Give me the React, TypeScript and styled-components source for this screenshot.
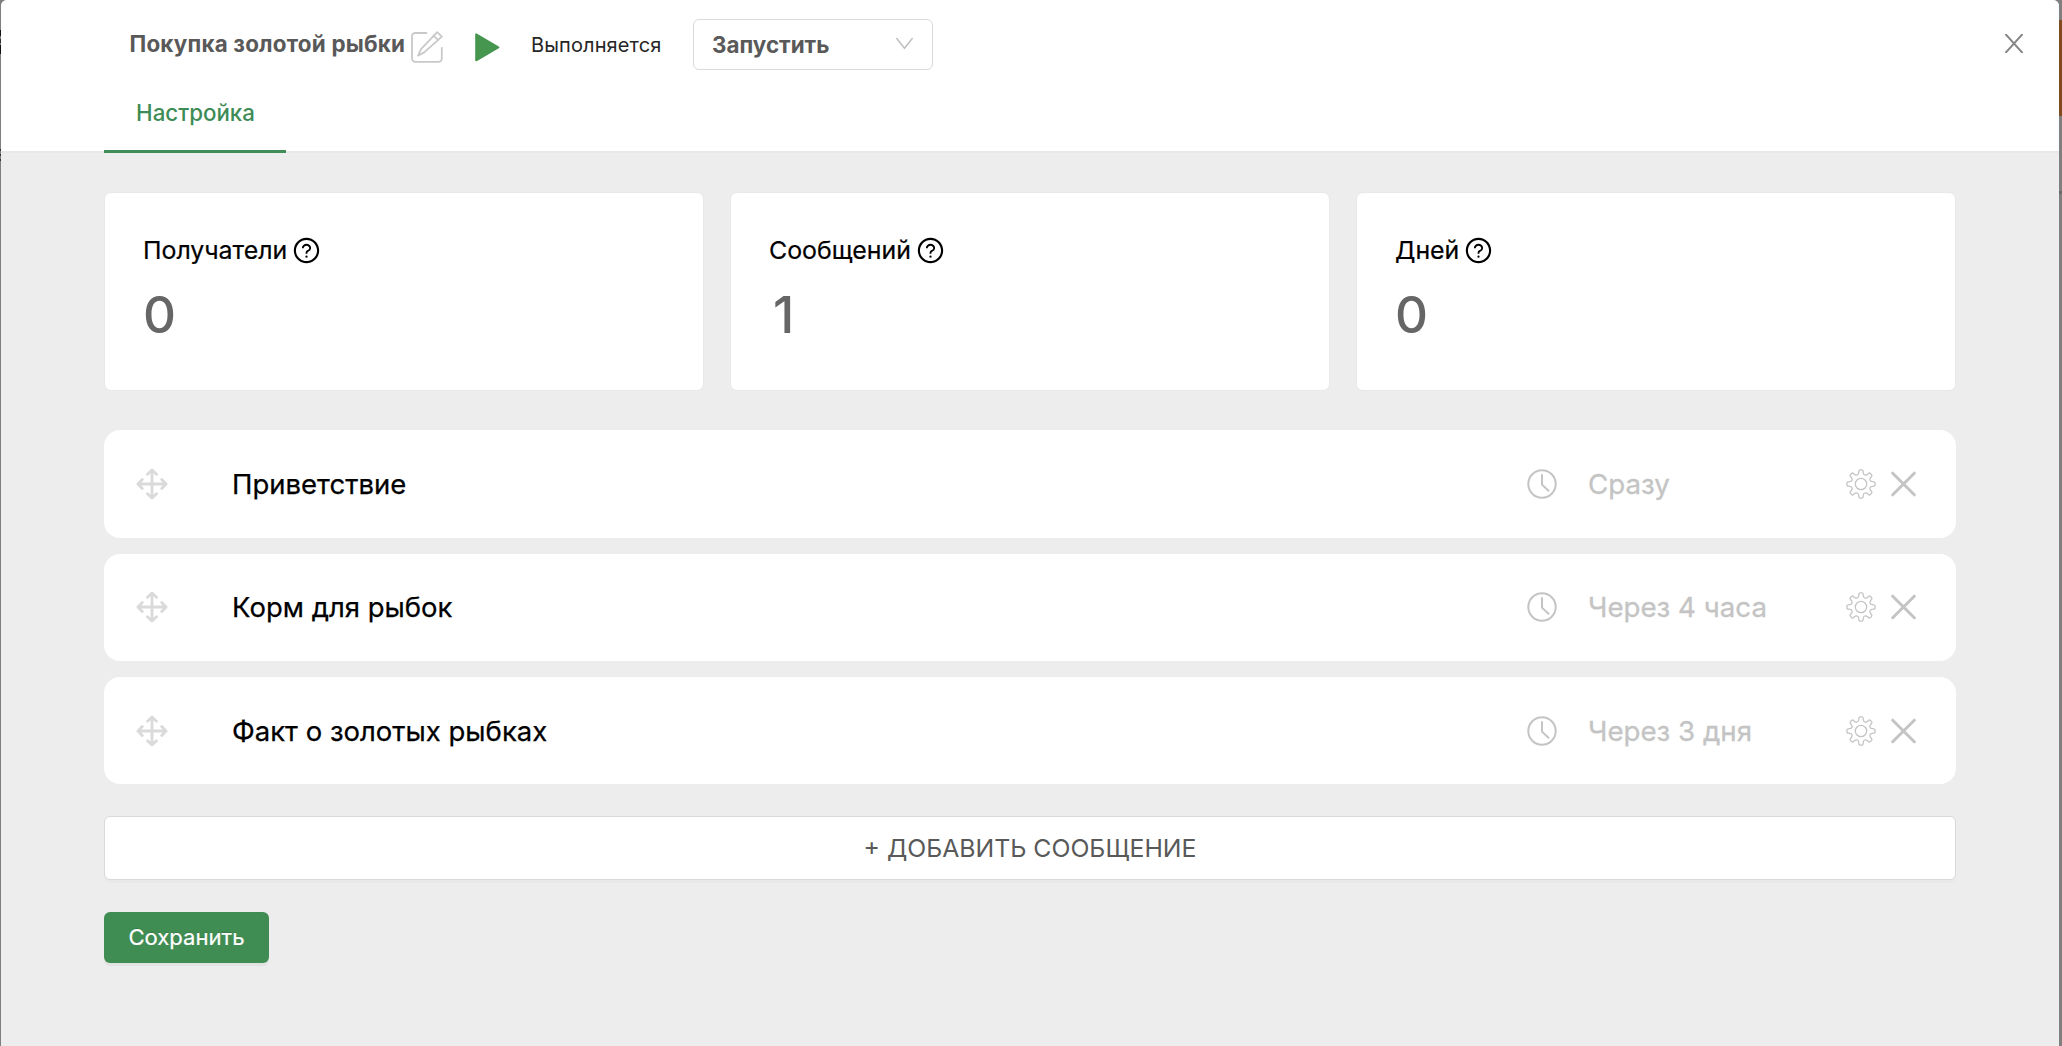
import React from "react";
import styled, { createGlobalStyle } from "styled-components";
import { AiOutlineQuestionCircle } from "react-icons/ai";

const GlobalStyle = createGlobalStyle`
  *, *::before, *::after { box-sizing: border-box; }
  body {
    margin: 0;
    overflow: hidden;
    background: #7f7f7f;
    font-family: Inter, "Noto Sans", sans-serif;
    color: #000;
  }
  svg { display: block; flex: none; }
`;

const Backdrop = styled.div`
  position: relative;
  display: flex;
  height: 1046px;
  padding: 0 3px 0 1px;
  background: #7f7f7f;
`;

const Sliver = styled.span<{ $side: "left" | "right"; $top: number; $height: number; $color: string }>`
  position: absolute;
  ${(p) => p.$side}: 0;
  top: ${(p) => p.$top}px;
  width: ${(p) => (p.$side === "left" ? 1 : 3)}px;
  height: ${(p) => p.$height}px;
  background: ${(p) => p.$color};
`;

const Modal = styled.div`
  flex: 1;
  display: flex;
  flex-direction: column;
  overflow: hidden;
  border-radius: 6px 6px 0 0;
  background: #ededed;
`;

const Header = styled.header`
  height: 153px;
  background: #fff;
  border-bottom: 2px solid #e8e8e8;
`;

const TitleBar = styled.div`
  display: flex;
  align-items: center;
  height: 89px;
  padding: 0 36px 0 128.5px;
`;

const Title = styled.h1`
  width: 281.5px;
  margin: 0 0 1px;
  font-size: 22.4px;
  line-height: 32px;
  font-weight: 700;
  letter-spacing: 0.2px;
  white-space: nowrap;
  color: #595959;
`;

const IconButton = styled.button`
  display: flex;
  padding: 0;
  border: 0;
  background: none;
  color: inherit;
`;

const PlayMark = styled.span`
  display: flex;
  margin: 5px 31px 0 32px;
`;

const EditButton = styled(IconButton)`
  margin-top: 4px;
`;

const Status = styled.span`
  width: 162px;
  padding-top: 1px;
  font-size: 20px;
  line-height: 30px;
  letter-spacing: 0.12px;
  color: #262626;
`;

const Select = styled.div`
  display: flex;
  align-items: center;
  justify-content: space-between;
  width: 240px;
  height: 51px;
  padding: 0 19px 1px 18px;
  border: 1px solid #d9d9d9;
  border-radius: 6px;
  font-size: 22.4px;
  font-weight: 700;
  color: #595959;
`;

const CloseButton = styled(IconButton)`
  margin: 0 0 2px auto;
`;

const Tabs = styled.nav`
  display: flex;
  padding-left: 103px;
`;

const Tab = styled.a`
  display: flex;
  justify-content: center;
  width: 182px;
  height: 64px;
  padding: 8px 0 0 1px;
  border-bottom: 3px solid #408d5a;
  font-size: 22.3px;
  line-height: 32px;
  font-weight: 500;
  color: #3d8c56;
`;

const Body = styled.main`
  display: flex;
  flex-direction: column;
  padding: 39px 103px 0;
`;

const Stats = styled.section`
  display: grid;
  grid-template-columns: repeat(3, 1fr);
  gap: 26px;
`;

const StatCard = styled.article`
  height: 199px;
  padding: 36px 38px;
  border: 1px solid #e8e8e8;
  border-radius: 7px;
  background: #fff;
`;

const StatLabel = styled.div`
  display: flex;
  align-items: center;
  gap: 5px;
  height: 42px;
  font-size: 24.9px;
  font-weight: 400;
  -webkit-text-stroke: 0.2px #000;
`;

const StatValue = styled.div<{ $indent: number }>`
  margin-top: 12px;
  padding-left: ${(p) => p.$indent}px;
  font-size: 51.2px;
  line-height: 62px;
  font-weight: 500;
  color: #666;
`;

const MessageList = styled.ul`
  display: flex;
  flex-direction: column;
  gap: 16px;
  margin: 39.3px 0 31.8px;
  padding: 0;
  list-style: none;
`;

const MessageRow = styled.li`
  display: flex;
  align-items: center;
  height: 107.3px;
  padding: 0 40px 0 32px;
  border-radius: 16px;
  background: #fff;
  color: #c4c4c4;
`;

const MessageName = styled.span`
  flex: 1;
  margin-left: 64px;
  font-size: 27.5px;
  line-height: 40px;
  color: #000;
  -webkit-text-stroke: 0.25px #000;
`;

const MessageDelay = styled.span`
  width: 258px;
  margin-left: 31px;
  font-size: 27.7px;
  line-height: 40px;
  -webkit-text-stroke: 0.3px #c4c4c4;
`;

const RowActions = styled.div`
  display: flex;
  align-items: center;
  gap: 15px;
`;

const AddButton = styled.button`
  height: 64px;
  padding: 1px 0 0;
  border: 1px solid #d9d9d9;
  border-radius: 6px;
  background: #fff;
  box-shadow: 0 3px 0 rgba(0, 0, 0, 0.016);
  font: 400 24.8px Inter, "Noto Sans", sans-serif;
  color: #595959;
`;

const SaveButton = styled.button`
  align-self: flex-start;
  width: 165px;
  height: 51px;
  margin-top: 32px;
  padding: 0;
  border: 0;
  border-radius: 6px;
  background: #408d53;
  box-shadow: 0 3px 0 rgba(0, 0, 0, 0.045);
  font: 400 22.1px Inter, "Noto Sans", sans-serif;
  -webkit-text-stroke: 0.2px #fff;
  text-shadow: 0 -1px 0 rgba(0, 0, 0, 0.12);
  color: #fff;
`;

const EditIcon = () => (
  <svg width="32" height="32" viewBox="0 0 32 32" fill="none" stroke="#c9c9c9" strokeWidth="1.8" strokeLinecap="round" strokeLinejoin="round">
    <path d="M15.5 2H4.2A3.2 3.2 0 0 0 1 5.2V27.6A3.2 3.2 0 0 0 4.2 30.8H27.6A3.2 3.2 0 0 0 30.8 27.6V16.8" />
    <path d="M26.2 1.1 30.8 5.7 13.2 21.4 7 24.6 10 18.2ZM22.4 4.7 27.2 9.2" />
  </svg>
);

const PlayIcon = () => (
  <svg width="25" height="29" viewBox="0 0 25 29" fill="#46964f" stroke="#46964f" strokeWidth="2" strokeLinejoin="round">
    <path d="M1.2 1.3V27.3L23.3 14.3Z" />
  </svg>
);

const ChevronIcon = () => (
  <svg width="17" height="12" viewBox="0 0 17 12" fill="none" stroke="#bfbfbf" strokeWidth="1.5">
    <path d="M0 -0.5 8.5 10.3 17 -0.5" />
  </svg>
);

const CloseIcon = () => (
  <svg width="18" height="19" viewBox="0 0 18 19" fill="none" stroke="#858585" strokeWidth="1.9">
    <path d="M0-.5 18 19.5M18-.5 0 19.5" />
  </svg>
);

const MoveIcon = () => (
  <svg width="32" height="32" viewBox="0 0 32 32" fill="none" stroke="#dadada" strokeWidth="2.8" strokeLinecap="round" strokeLinejoin="round">
    <path d="M16 2.2V29.8M2.2 16H29.8M11.5 6.3 16 1.9 20.5 6.3M11.5 25.7 16 30.1 20.5 25.7M6.3 11.5 1.9 16 6.3 20.5M25.7 11.5 30.1 16 25.7 20.5" />
  </svg>
);

const ClockIcon = () => (
  <svg width="30" height="30" viewBox="0 0 30 30" fill="none" stroke="currentColor" strokeWidth="2">
    <circle cx="15" cy="15" r="13.7" />
    <path d="M15 5.3V15.6L22 22.3" />
  </svg>
);

const gearPath = (() => {
  const teeth = 8;
  const at = (r: number, deg: number) => {
    const a = ((deg - 90) * Math.PI) / 180;
    return `${(15 + r * Math.cos(a)).toFixed(2)} ${(15 + r * Math.sin(a)).toFixed(2)}`;
  };
  let d = "";
  for (let i = 0; i < teeth; i++) {
    const c = (i * 360) / teeth;
    d += `${i ? "L" : "M"}${at(12.9, c - 9.5)}Q${at(14.2, c - 8.5)} ${at(14.1, c - 3.5)}`;
    d += `L${at(14.1, c + 3.5)}Q${at(14.2, c + 8.5)} ${at(12.9, c + 9.5)}`;
    d += `L${at(11.5, c + 11.5)}C${at(9.3, c + 16)} ${at(9.3, c + 29)} ${at(11.5, c + 33.5)}`;
  }
  return d + "Z";
})();

const GearIcon = () => (
  <svg width="30" height="30" viewBox="0 0 30 30" fill="none" stroke="currentColor" strokeWidth="1.3" strokeLinejoin="round">
    <path d={gearPath} />
    <circle cx="15" cy="15" r="5.7" />
  </svg>
);

const RemoveIcon = () => (
  <svg width="25" height="26" viewBox="0 0 25 26" fill="none" stroke="currentColor" strokeWidth="3" strokeLinecap="round">
    <path d="M1.7 2.2 23.3 23.8M23.3 2.2 1.7 23.8" />
  </svg>
);

const stats = [
  { label: "Получатели", value: 0, indent: 0 },
  { label: "Сообщений", value: 1, indent: 4 },
  { label: "Дней", value: 0, indent: 0 },
];

const messages = [
  { name: "Приветствие", delay: "Сразу" },
  { name: "Корм для рыбок", delay: "Через 4 часа" },
  { name: "Факт о золотых рыбках", delay: "Через 3 дня" },
];

export default function App() {
  return (
    <>
      <GlobalStyle />
      <Backdrop>
        <Sliver $side="left" $top={30} $height={6} $color="#111" />
        <Sliver $side="left" $top={39} $height={4} $color="#333" />
        <Sliver $side="left" $top={45} $height={9} $color="#111" />
        <Sliver $side="left" $top={149} $height={2} $color="#333" />
        <Sliver $side="left" $top={154} $height={2} $color="#333" />
        <Sliver $side="left" $top={159} $height={2} $color="#333" />
        <Sliver $side="right" $top={20} $height={96} $color="#7f4a1d" />
        <Sliver $side="right" $top={191} $height={3} $color="#6a6a6a" />
        <Modal>
          <Header>
            <TitleBar>
              <Title>Покупка золотой рыбки</Title>
              <EditButton><EditIcon /></EditButton>
              <PlayMark><PlayIcon /></PlayMark>
              <Status>Выполняется</Status>
              <Select>
                Запустить
                <ChevronIcon />
              </Select>
              <CloseButton><CloseIcon /></CloseButton>
            </TitleBar>
            <Tabs>
              <Tab>Настройка</Tab>
            </Tabs>
          </Header>
          <Body>
            <Stats>
              {stats.map((s) => (
                <StatCard key={s.label}>
                  <StatLabel>
                    {s.label}
                    <AiOutlineQuestionCircle size={29} />
                  </StatLabel>
                  <StatValue $indent={s.indent}>{s.value}</StatValue>
                </StatCard>
              ))}
            </Stats>
            <MessageList>
              {messages.map((m) => (
                <MessageRow key={m.name}>
                  <MoveIcon />
                  <MessageName>{m.name}</MessageName>
                  <ClockIcon />
                  <MessageDelay>{m.delay}</MessageDelay>
                  <RowActions>
                    <IconButton><GearIcon /></IconButton>
                    <IconButton><RemoveIcon /></IconButton>
                  </RowActions>
                </MessageRow>
              ))}
            </MessageList>
            <AddButton>+ ДОБАВИТЬ СООБЩЕНИЕ</AddButton>
            <SaveButton>Сохранить</SaveButton>
          </Body>
        </Modal>
      </Backdrop>
    </>
  );
}
